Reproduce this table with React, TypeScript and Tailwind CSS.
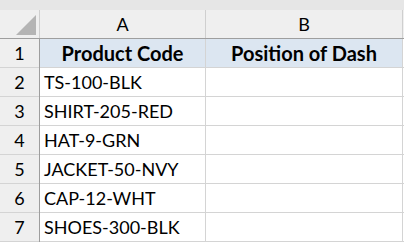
const rows = ["TS-100-BLK", "SHIRT-205-RED", "HAT-9-GRN", "JACKET-50-NVY", "CAP-12-WHT", "SHOES-300-BLK"]

function App() {
    return (
        <div className="w-[404px] h-[243px] bg-white overflow-hidden font-['Lato',sans-serif] text-black">
            <div className="h-[10px] bg-[#e6e6e6]" />
            <div className="grid grid-cols-[39px_1px_165px_1px_196px_1px_2px] grid-rows-[28px_1px_repeat(6,28px_1px)_28px_1px]">
                {/* header row */}
                <div className="bg-[#efefef] relative">
                    <div className="absolute right-[3px] bottom-[3px] w-0 h-0 border-l-[20px] border-l-transparent border-b-[20px] border-b-[#b4b4b4]" />
                </div>
                <div className="bg-[#cfcfcf]" />
                <div className="bg-[#efefef] flex items-center justify-center text-[18px] leading-none">A</div>
                <div className="bg-[#cfcfcf]" />
                <div className="bg-[#efefef] flex items-center justify-center text-[18px] leading-none">B</div>
                <div className="bg-[#cfcfcf]" />
                <div className="bg-[#efefef]" />
                <div className="bg-[#9e9e9e] col-span-7" />
                {/* row 1 */}
                <div className="bg-[#efefef] flex items-center justify-center text-[18px]">1</div>
                <div className="bg-[#9e9e9e]" />
                <div className="bg-[#dce6f1] flex items-center justify-center font-bold text-[20px]">Product Code</div>
                <div className="bg-[#d4d4d4]" />
                <div className="bg-[#dce6f1] flex items-center justify-center font-bold text-[20px]">Position of Dash</div>
                <div className="bg-[#d4d4d4]" />
                <div className="bg-white" />
                <div className="bg-[#d4d4d4]" />
                <div className="bg-[#9e9e9e]" />
                <div className="bg-[#d4d4d4] col-span-5" />
                {rows.map((r, i) => (
                    <>
                        <div key={"n" + i} className="bg-[#efefef] flex items-center justify-center text-[18px]">{i + 2}</div>
                        <div className="bg-[#9e9e9e]" />
                        <div className="flex items-center pl-[4px] text-[18px]">{r}</div>
                        <div className="bg-[#d4d4d4]" />
                        <div />
                        <div className="bg-[#d4d4d4]" />
                        <div />
                        <div className="bg-[#d4d4d4]" />
                        <div className="bg-[#9e9e9e]" />
                        <div className="bg-[#d4d4d4] col-span-5" />
                    </>
                ))}
            </div>
        </div>
    )
}

export default App
